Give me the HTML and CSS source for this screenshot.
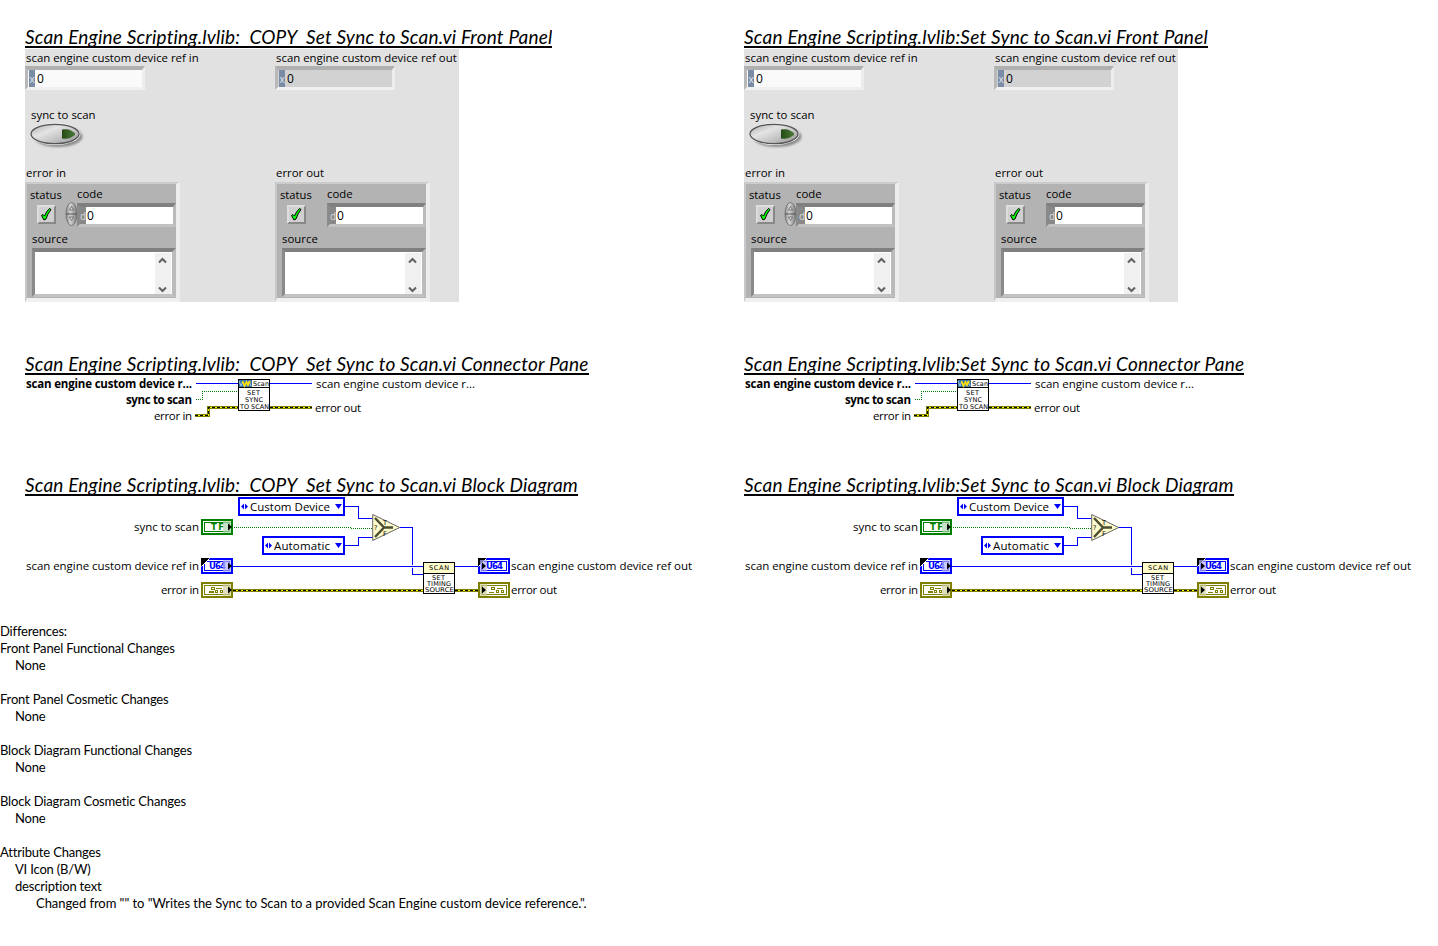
FILE: index.html
```html
<!DOCTYPE html>
<html lang="en">
<head>
<meta charset="utf-8">
<title>VI Comparison</title>
<link rel="stylesheet" href="styles.css">
</head>
<body>
<svg class="defs" width="0" height="0" aria-hidden="true">
  <defs>
    <linearGradient id="metal" x1="0" y1="0" x2="1" y2="1"><stop offset="0" stop-color="#aaa"/><stop offset=".35" stop-color="#e4e4e4"/><stop offset=".7" stop-color="#bcbcbc"/><stop offset="1" stop-color="#888"/></linearGradient>
    <linearGradient id="knob" x1="0" x2="1"><stop offset="0" stop-color="#888"/><stop offset=".4" stop-color="#d4d4d4"/><stop offset="1" stop-color="#777"/></linearGradient>
    <linearGradient id="led" x1="0" x2="1"><stop offset="0" stop-color="#244a14"/><stop offset="1" stop-color="#4c7a38"/></linearGradient>
    <filter id="soft" x="-20%" y="-20%" width="140%" height="140%"><feGaussianBlur stdDeviation="1.3"/></filter>
    <g id="toggle">
      <ellipse cx="30" cy="13.5" rx="24.5" ry="10.5" fill="#8c8c8c" filter="url(#soft)"/>
      <ellipse cx="27" cy="11" rx="25.5" ry="11" fill="#eee"/>
      <ellipse cx="27" cy="11" rx="24" ry="9.7" fill="url(#metal)" stroke="#555" stroke-width="1.3"/>
      <path d="M34 6.500q6-1 9 1l4 2.500v2l-4 2.500q-4 2-9 1z" fill="url(#led)"/>
    </g>
    <g id="check">
      <path d="M4.500 9.500l2.500 4.500 2-1 2-5 3-4.500-1.500-1-3 3.500-2 4-1.500-1.500z" fill="#0f0" stroke="#000"/>
    </g>
    <g id="spin">
      <ellipse cx="6.500" cy="12" rx="5.500" ry="11.500" fill="url(#knob)" stroke="#777"/>
      <path d="M1 12h11" stroke="#555"/>
      <path d="M4.500 8l2-3.500 2 3.500zM4.500 15l2 3.500 2-3.500z" fill="#ddd" stroke="#555" stroke-width=".7"/>
    </g>
    <g id="chevrons" fill="none" stroke="#606060" stroke-width="2">
      <path d="M4 9.500l3.500-3.500 3.500 3.500M4 34.500l3.500 3.500 3.500-3.500"/>
    </g>
    <g id="connector" shape-rendering="crispEdges" fill="none">
      <path d="M196 383.500h42M270 383.500h42" stroke="#00f"/>
      <path d="M196 399.500h6.500v-8h36" stroke="#007d00" stroke-dasharray="1 1"/>
      <path d="M195 415.500h13v-8h30M270 407.500h42" stroke="#808000" stroke-width="3"/>
      <path d="M195 415.500h13v-8h30M270 407.500h42" stroke="#ff0"/>
      <path d="M195 415.500h13v-8h30M270 407.500h42" stroke="#000" stroke-dasharray="3 2"/>
      <rect x="238.500" y="379.500" width="31" height="31" fill="#fff" stroke="#000"/>
      <path d="M239 380h13v7h-13z" fill="#3972a5"/>
      <path d="M239 387.500h30" stroke="#000"/>
      <g shape-rendering="auto"><path d="M239 381l2 5 1.500-4 1.500 4M247 386l2-5 2 5" stroke="#9cc8e8"/><path d="M242.500 381l2 5 2-4 1.500 3 2-4" stroke="#ffe000" stroke-width="1.700"/></g>
    </g>
    <g id="diagram" shape-rendering="crispEdges" fill="none">
      <path d="M345 506.500h13.500v12h14M345 545.500h13.500v-8h14M400 527.500h12.500v37M412.500 568v6.500h11M233 566.500h190M455 566.500h23" stroke="#00f"/>
      <path d="M234 527.500h117M351 528.500h21" stroke="#007d00" stroke-dasharray="1 1"/>
      <path d="M233 590.500h190M455 590.500h23" stroke="#808000" stroke-width="3"/>
      <path d="M233 590.500h190M455 590.500h23" stroke="#ff0"/>
      <path d="M233 590.500h190M455 590.500h23" stroke="#000" stroke-dasharray="3 2"/>
      <path d="M239 498h105v17H239zM263 537h81v17H263z" fill="#fff" stroke="#00f" stroke-width="2"/>
      <path d="M241 506.500l3-3v6zM248 506.500l-3-3v6zM265 545.500l3-3v6zM272 545.500l-3-3v6zM335 504h7l-3.500 5zM335 543h7l-3.500 5z" fill="#00f" shape-rendering="auto"/>
      <g shape-rendering="auto">
        <path d="M372.700 514.500v26l27-13z" fill="#fffccc" stroke="#666"/>
        <path d="M375 518l9 9.500-9 9.500M384 527.500h9" stroke="#4d4d33" stroke-width="2.500"/>
      </g>
      <g stroke="#008000"><path d="M202 520h30v14h-30z" fill="#fff" stroke-width="2"/><path d="M204.500 522.500h25v9h-25z"/></g>
      <g stroke="#00f"><path d="M202 559h30v14h-30zM479 559h30v14h-30z" fill="#fff" stroke-width="2"/><path d="M204.500 561.500h25v9h-25zM481.500 561.500h25v9h-25z"/></g>
      <g stroke="#808000"><path d="M202 583h30v14h-30zM479 583h30v14h-30z" fill="#fff" stroke-width="2"/><path d="M204.500 585.500h25v9h-25zM481.500 585.500h25v9h-25z"/>
        <path d="M211.500 587.500h3v2h-3zM216 588.500h6M209.500 591.500h4v1h-4zM215.500 590.500h2v2h-2zM220.500 590.500h2v2h-2zM491.500 587.500h3v2h-3zM497 588.500h6M489 592.500h5M496.500 590.500h2v2h-2zM501.500 590.500h2v2h-2z"/></g>
      <path d="M201 558h8l-8 8zM478 558h8l-8 8z" fill="#000"/>
      <path d="M201.500 566.500l8-8M478.500 566.500l8-8" stroke="#fff" shape-rendering="auto"/>
      <rect x="423.500" y="562.500" width="31" height="31" fill="#fff" stroke="#000"/>
      <path d="M424 563h30v10h-30z" fill="#fffccc"/><path d="M424 573.500h30" stroke="#000"/>
    </g>
    <g id="shades">
      <path d="M223 521h8v12h-8z" fill="#b0d5b0" opacity=".7"/>
      <path d="M223 560h8v12h-8zM480 560h7v12h-7z" fill="#b0b0ff" opacity=".7"/>
      <path d="M223 584h8v12h-8zM480 584h7v12h-7z" fill="#d0d0a0" opacity=".7"/>
      <path d="M228 523.500l4 3.500-4 3.500zM228 562.500l4 3.500-4 3.500zM228 586.500l4 3.500-4 3.500zM482 562.500l4 3.500-4 3.500zM482 586.500l4 3.500-4 3.500z"/>
    </g>
  </defs>
</svg>

<main class="compare">
  <section class="vi">
    <h2 class="title">Scan Engine Scripting.lvlib:  COPY  Set Sync to Scan.vi Front Panel</h2>
    <div class="panel">
      <div class="col">
        <label class="label">scan engine custom device ref in</label>
        <div class="num"><span class="radix">x</span><span>0</span></div>
        <div class="sync"><label class="label">sync to scan</label><svg width="60" height="28"><use href="#toggle"/></svg></div>
        <label class="label">error in</label>
        <div class="cluster">
          <div class="row"><div class="status"><label class="label">status</label><div class="box"><svg width="17" height="17"><use href="#check"/></svg></div></div>
            <svg class="spin" width="13" height="25"><use href="#spin"/></svg>
            <div class="code"><label class="label">code</label><div class="num dark"><span class="radix">d</span><span>0</span></div></div></div>
          <label class="label src">source</label>
          <div class="source"><svg class="bar" width="16" height="41"><use href="#chevrons"/></svg></div>
        </div>
      </div>
      <div class="col">
        <label class="label">scan engine custom device ref out</label>
        <div class="num out"><span class="radix">x</span><span>0</span></div>
        <div class="sync"></div>
        <label class="label">error out</label>
        <div class="cluster">
          <div class="row"><div class="status"><label class="label">status</label><div class="box"><svg width="17" height="17"><use href="#check"/></svg></div></div>
            <div class="spin"></div>
            <div class="code"><label class="label">code</label><div class="num dark"><span class="radix">d</span><span>0</span></div></div></div>
          <label class="label src">source</label>
          <div class="source"><svg class="bar" width="16" height="41"><use href="#chevrons"/></svg></div>
        </div>
      </div>
    </div>
    <h2 class="title second">Scan Engine Scripting.lvlib:  COPY  Set Sync to Scan.vi Connector Pane</h2>
    <svg class="pane" width="690" height="50" viewBox="25 376 690 50">
      <use href="#connector"/>
      <g class="bold"><text x="26" y="388" textLength="166">scan engine custom device r...</text><text x="126" y="404" textLength="66">sync to scan</text></g>
      <text x="154" y="420" textLength="38">error in</text>
      <text x="316" y="388" textLength="159">scan engine custom device r...</text><text x="315" y="412" textLength="46">error out</text>
      <g class="tiny"><text x="253" y="386" textLength="16">Scan</text><text x="247" y="395" textLength="13">SET</text><text x="245" y="402" textLength="18">SYNC</text><text x="240" y="409" textLength="29" lengthAdjust="spacingAndGlyphs">TO SCAN</text></g>
    </svg>
    <h2 class="title third">Scan Engine Scripting.lvlib:  COPY  Set Sync to Scan.vi Block Diagram</h2>
    <svg class="pane" width="690" height="106" viewBox="25 497 690 106">
      <use href="#diagram"/>
      <text x="250" y="511" textLength="80">Custom Device</text><text x="274" y="550" textLength="56">Automatic</text>
      <text x="134" y="531" textLength="65">sync to scan</text><text x="26" y="570" textLength="173">scan engine custom device ref in</text><text x="161" y="594" textLength="38">error in</text>
      <text x="511" y="570" textLength="181">scan engine custom device ref out</text><text x="511" y="594" textLength="46">error out</text>
      <g class="tiny"><text x="429" y="570" textLength="20">SCAN</text><text x="432" y="580" textLength="13">SET</text><text x="427" y="586" textLength="24">TIMING</text><text x="425" y="592" textLength="29" lengthAdjust="spacingAndGlyphs">SOURCE</text><text x="374" y="530">?</text><text x="383" y="525">T</text><text x="383" y="536">F</text></g>
      <g class="type"><text class="green" x="211" y="530" textLength="13">TF</text><text class="blue" x="209" y="569" textLength="17">U64</text><text class="blue" x="486" y="569" textLength="17">U64</text></g>
      <use href="#shades"/>
    </svg>
  </section>

  <section class="vi original">
    <h2 class="title">Scan Engine Scripting.lvlib:Set Sync to Scan.vi Front Panel</h2>
    <div class="panel">
      <div class="col">
        <label class="label">scan engine custom device ref in</label>
        <div class="num"><span class="radix">x</span><span>0</span></div>
        <div class="sync"><label class="label">sync to scan</label><svg width="60" height="28"><use href="#toggle"/></svg></div>
        <label class="label">error in</label>
        <div class="cluster">
          <div class="row"><div class="status"><label class="label">status</label><div class="box"><svg width="17" height="17"><use href="#check"/></svg></div></div>
            <svg class="spin" width="13" height="25"><use href="#spin"/></svg>
            <div class="code"><label class="label">code</label><div class="num dark"><span class="radix">d</span><span>0</span></div></div></div>
          <label class="label src">source</label>
          <div class="source"><svg class="bar" width="16" height="41"><use href="#chevrons"/></svg></div>
        </div>
      </div>
      <div class="col">
        <label class="label">scan engine custom device ref out</label>
        <div class="num out"><span class="radix">x</span><span>0</span></div>
        <div class="sync"></div>
        <label class="label">error out</label>
        <div class="cluster">
          <div class="row"><div class="status"><label class="label">status</label><div class="box"><svg width="17" height="17"><use href="#check"/></svg></div></div>
            <div class="spin"></div>
            <div class="code"><label class="label">code</label><div class="num dark"><span class="radix">d</span><span>0</span></div></div></div>
          <label class="label src">source</label>
          <div class="source"><svg class="bar" width="16" height="41"><use href="#chevrons"/></svg></div>
        </div>
      </div>
    </div>
    <h2 class="title second">Scan Engine Scripting.lvlib:Set Sync to Scan.vi Connector Pane</h2>
    <svg class="pane" width="690" height="50" viewBox="25 376 690 50">
      <use href="#connector"/>
      <g class="bold"><text x="26" y="388" textLength="166">scan engine custom device r...</text><text x="126" y="404" textLength="66">sync to scan</text></g>
      <text x="154" y="420" textLength="38">error in</text>
      <text x="316" y="388" textLength="159">scan engine custom device r...</text><text x="315" y="412" textLength="46">error out</text>
      <g class="tiny"><text x="253" y="386" textLength="16">Scan</text><text x="247" y="395" textLength="13">SET</text><text x="245" y="402" textLength="18">SYNC</text><text x="240" y="409" textLength="29" lengthAdjust="spacingAndGlyphs">TO SCAN</text></g>
    </svg>
    <h2 class="title third">Scan Engine Scripting.lvlib:Set Sync to Scan.vi Block Diagram</h2>
    <svg class="pane" width="690" height="106" viewBox="25 497 690 106">
      <use href="#diagram"/>
      <text x="250" y="511" textLength="80">Custom Device</text><text x="274" y="550" textLength="56">Automatic</text>
      <text x="134" y="531" textLength="65">sync to scan</text><text x="26" y="570" textLength="173">scan engine custom device ref in</text><text x="161" y="594" textLength="38">error in</text>
      <text x="511" y="570" textLength="181">scan engine custom device ref out</text><text x="511" y="594" textLength="46">error out</text>
      <g class="tiny"><text x="429" y="570" textLength="20">SCAN</text><text x="432" y="580" textLength="13">SET</text><text x="427" y="586" textLength="24">TIMING</text><text x="425" y="592" textLength="29" lengthAdjust="spacingAndGlyphs">SOURCE</text><text x="374" y="530">?</text><text x="383" y="525">T</text><text x="383" y="536">F</text></g>
      <g class="type"><text class="green" x="211" y="530" textLength="13">TF</text><text class="blue" x="209" y="569" textLength="17">U64</text><text class="blue" x="486" y="569" textLength="17">U64</text></g>
      <use href="#shades"/>
    </svg>
  </section>
</main>

<section class="diffs">
  <p>Differences:</p>
  <div class="group"><p>Front Panel Functional Changes</p><p class="in">None</p></div>
  <div class="group"><p>Front Panel Cosmetic Changes</p><p class="in">None</p></div>
  <div class="group"><p>Block Diagram Functional Changes</p><p class="in">None</p></div>
  <div class="group"><p>Block Diagram Cosmetic Changes</p><p class="in">None</p></div>
  <div class="group"><p>Attribute Changes</p><p class="in">VI Icon (B/W)</p><p class="in">description text</p><p class="deep">Changed from "" to "Writes the Sync to Scan to a provided Scan Engine custom device reference.".</p></div>
</section>
</body>
</html>
```
FILE: styles.css
```css
* { box-sizing: border-box; }
body { margin: 0; background: #fff; color: #000; font-family: "Open Sans", "Noto Sans", sans-serif; overflow: hidden; }
svg { display: block; flex: none; }
.defs { height: 0; }
.compare { display: grid; grid-template-columns: 719px 719px; height: 623px; }
.vi { padding: 24px 0 0 25px; display: flex; flex-direction: column; align-items: flex-start; }

.title { margin: 0; height: 24px; overflow: hidden; border-bottom: 2px solid #000; white-space: pre; font: italic 400 19px/26px Lato, "Open Sans", sans-serif; letter-spacing: .18px; font-variant-ligatures: none; flex: none; }
.original .title { letter-spacing: .22px; }
.title.second { margin-top: 49px; }
.title.third { margin-top: 46px; }
.pane { margin-top: 1px; }
.pane text { font-size: 11.5px; }
.pane .bold text { font-weight: 700; }
.pane .tiny text { font: 400 6.5px "DejaVu Sans", sans-serif; }
.pane .type text { font: 700 8.5px "DejaVu Sans", sans-serif; }
.pane .type .green { fill: #008000; }
.pane .type .blue { fill: #00f; }

.panel { margin-top: 1px; width: 434px; height: 253px; background: #e1e1e1; display: grid; grid-template-columns: 250px 184px; flex: none; }
.col { display: flex; flex-direction: column; }
.label { display: block; height: 17px; padding-left: 1px; font-size: 11.4px; line-height: 17px; white-space: nowrap; flex: none; }
.num { width: 120px; height: 24px; display: flex; border: solid; border-width: 4px 3px 3px 3px; border-color: #b0b0b0 #ededed #f0f0f0 #b8b8b8; background: #fafafa; font-size: 12px; line-height: 17px; flex: none; }
.num.out { background: #d2d2d2; }
.radix { width: 6px; margin: 0 2px 0 1px; background: #7a8ba5; color: #e0e6ee; font-size: 10px; line-height: 18px; text-align: center; }
.sync { height: 74px; padding: 16px 0 0 5px; flex: none; }
.sync svg { margin-left: -2px; }

.cluster { width: 155px; height: 120px; margin-top: 1px; border: solid; border-width: 2px 4px 4px 2px; border-color: #ccc #ededed #f0f0f0 #c8c8c8; background: #b3b3b3; }
.row { display: flex; height: 46px; }
.status { width: 38px; padding: 2px 0 0 2px; }
.status .label { font-size: 11.2px; }
.box { width: 19px; height: 19px; margin: 2px 0 0 8px; border: 2px solid; border-color: #dedede #888 #888 #dedede; background: #d0d0d0; }
.box svg { margin: -1px -1px -1px -2px; }
.spin { width: 13px; margin-top: 18px; }
.code { width: 99px; margin-left: -1px; padding-top: 1px; }
.code .label { padding-left: 0; height: 18px; }
.num.dark { width: 99px; height: 24px; border-color: #808080 #bbb #c2c2c2 #8a8a8a; background: #fff; }
.dark .radix { background: #888; color: #ddd; margin: 0 1px 0 0; }
.src { height: 18px; padding-left: 5px; line-height: 18px; }
.source { margin-left: 5px; width: 144px; height: 49px; border: solid; border-width: 4px 4px 3px 3px; border-color: #808080 #bbb #c2c2c2 #8a8a8a; background: #fff; display: flex; justify-content: flex-end; padding: 1px 1px 0 0; }
.bar { background: #f0f0f0; }

.diffs { font: 13px/17px Lato, "Open Sans", sans-serif; white-space: nowrap; letter-spacing: -.18px; font-variant-ligatures: none; }
.diffs p { margin: 0; height: 17px; }
.group { margin-bottom: 17px; }
.in { padding-left: 15px; }
.diffs .deep { padding-left: 36px; letter-spacing: -.045px; }
```
